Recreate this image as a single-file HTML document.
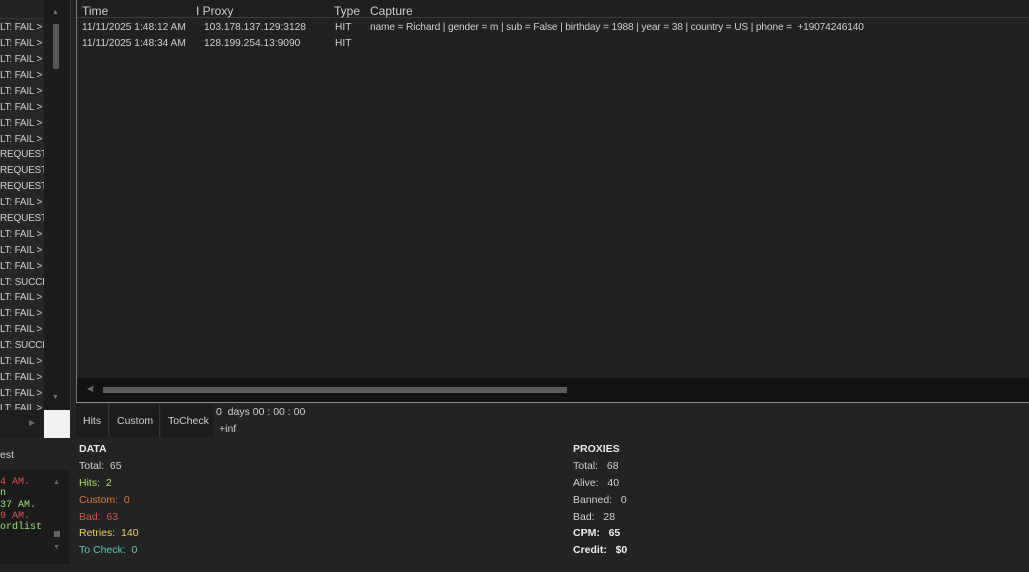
<!DOCTYPE html>
<html><head><meta charset="utf-8"><style>
*{margin:0;padding:0;box-sizing:border-box}
body{width:1029px;height:572px;background:#232323;position:relative;overflow:hidden;font-family:"Liberation Sans",sans-serif;font-size:10.5px;color:#d0d0d0}
.a{position:absolute;white-space:nowrap}
.log div{position:absolute;left:0;font-size:10px;color:#cfcfcf;letter-spacing:-0.2px}
.mono{font-family:"Liberation Mono",monospace;font-size:10px}
.b{font-weight:bold}
.g{font-size:10.2px}
</style></head><body>
<div class="a" style="left:0;top:0;width:44px;height:410px;background:#262626"></div>
<div class="a" style="left:0;top:0;width:44px;height:19px;background:#232323;border-bottom:1px solid #333"></div>
<div class="a" style="left:44px;top:0;width:26px;height:410px;background:#1b1b1b"></div>
<div class="a" style="left:53px;top:24px;width:6px;height:45px;background:#555"></div>
<div class="a" style="left:52px;top:9px;color:#777;font-size:7px">▲</div>
<div class="a" style="left:52px;top:394px;color:#777;font-size:7px">▼</div>
<div class="a" style="left:0;top:410px;width:44px;height:28px;background:#1e1e1e"></div>
<div class="a" style="left:29px;top:418px;color:#666;font-size:8px">▶</div>
<div class="a" style="left:44px;top:410px;width:26px;height:28px;background:#f2f2f2"></div>
<div class="log a" style="left:0;top:1px;width:44px;height:409px;overflow:hidden">
<div style="top:21px">LT: FAIL &gt;</div><div style="top:37px">LT: FAIL &gt;</div><div style="top:53px">LT: FAIL &gt;</div><div style="top:69px">LT: FAIL &gt;</div><div style="top:85px">LT: FAIL &gt;</div><div style="top:101px">LT: FAIL &gt;</div><div style="top:117px">LT: FAIL &gt;</div><div style="top:133px">LT: FAIL &gt;</div>
<div style="top:148px">REQUEST</div><div style="top:164px">REQUEST</div><div style="top:180px">REQUEST</div><div style="top:196px">LT: FAIL &gt;</div><div style="top:212px">REQUEST</div><div style="top:228px">LT: FAIL &gt;</div><div style="top:244px">LT: FAIL &gt;</div><div style="top:260px">LT: FAIL &gt;</div><div style="top:276px">LT: SUCCE</div><div style="top:291px">LT: FAIL &gt;</div><div style="top:307px">LT: FAIL &gt;</div><div style="top:323px">LT: FAIL &gt;</div><div style="top:339px">LT: SUCCE</div><div style="top:355px">LT: FAIL &gt;</div><div style="top:371px">LT: FAIL &gt;</div><div style="top:387px">LT: FAIL &gt;</div><div style="top:402px">LT: FAIL &gt;</div>
</div>
<div class="a" style="left:70px;top:0;width:6px;height:410px;background:#232323;border-left:1px solid #333"></div>
<div class="a" style="left:76px;top:0;width:953px;height:403px;background:#212121;border-left:1px solid #777;border-bottom:1px solid #888"></div>
<div class="a" style="left:77px;top:0;width:952px;height:18px;background:#1f1f1f;border-bottom:1px solid #3a3a3a"></div>
<div class="a" style="left:82px;top:4px;font-size:12px;color:#ccc">Time</div>
<div class="a" style="left:196px;top:4px;font-size:12px;color:#ccc">I Proxy</div>
<div class="a" style="left:334px;top:4px;font-size:12px;color:#ccc">Type</div>
<div class="a" style="left:370px;top:4px;font-size:12px;color:#ccc">Capture</div>
<div class="a g" style="left:82px;top:22px">11/11/2025 1:48:12 AM</div>
<div class="a g" style="left:204px;top:22px">103.178.137.129:3128</div>
<div class="a g" style="left:335px;top:22px">HIT</div>
<div class="a g" style="left:370px;top:22px;letter-spacing:-0.15px">name = Richard | gender = m | sub = False | birthday = 1988 | year = 38 | country = US | phone = &nbsp;+19074246140</div>
<div class="a g" style="left:82px;top:38px">11/11/2025 1:48:34 AM</div>
<div class="a g" style="left:204px;top:38px">128.199.254.13:9090</div>
<div class="a g" style="left:335px;top:38px">HIT</div>
<div class="a" style="left:77px;top:378px;width:952px;height:24px;background:#131313"></div>
<div class="a" style="left:87px;top:384px;color:#666;font-size:8px">◀</div>
<div class="a" style="left:103px;top:387px;width:464px;height:6px;background:#5c5c5c"></div>
<div class="a" style="left:76px;top:404px;width:33px;height:33px;background:#1c1c1c;border-right:1px solid #333"></div>
<div class="a" style="left:83px;top:415px">Hits</div>
<div class="a" style="left:110px;top:404px;width:50px;height:33px;background:#1c1c1c;border-right:1px solid #333"></div>
<div class="a" style="left:117px;top:415px">Custom</div>
<div class="a" style="left:161px;top:404px;width:52px;height:33px;background:#1c1c1c"></div>
<div class="a" style="left:168px;top:415px">ToCheck</div>
<div class="a" style="left:216px;top:406px">0 &nbsp;days 00 : 00 : 00</div>
<div class="a" style="left:219px;top:423px">+inf</div>
<div class="a" style="left:0;top:449px">est</div>
<div class="a" style="left:0;top:470px;width:70px;height:94px;background:#1b1b1b"></div>
<div class="a mono" style="left:0;top:477px;color:#e05050">4 AM.</div>
<div class="a mono" style="left:0;top:488px;color:#9be07a">n</div>
<div class="a mono" style="left:0;top:500px;color:#9be07a">37 AM.</div>
<div class="a mono" style="left:0;top:511px;color:#e05050">9 AM.</div>
<div class="a mono" style="left:0;top:522px;color:#9be07a">ordlist</div>
<div class="a" style="left:53px;top:479px;color:#666;font-size:7px">▲</div>
<div class="a" style="left:54px;top:531px;width:6px;height:6px;background:#666"></div>
<div class="a" style="left:53px;top:544px;color:#666;font-size:7px">▼</div>
<div class="a b" style="left:79px;top:443px;color:#e8e8e8">DATA</div>
<div class="a" style="left:79px;top:460px">Total: &nbsp;65</div>
<div class="a" style="left:79px;top:477px;color:#a8e060">Hits: &nbsp;2</div>
<div class="a" style="left:79px;top:494px;color:#d07a3a">Custom: &nbsp;0</div>
<div class="a" style="left:79px;top:511px;color:#d05050">Bad: &nbsp;63</div>
<div class="a" style="left:79px;top:527px;color:#e8d060">Retries: &nbsp;140</div>
<div class="a" style="left:79px;top:544px;color:#5fc8b0">To Check: &nbsp;0</div>
<div class="a b" style="left:573px;top:443px;color:#e8e8e8">PROXIES</div>
<div class="a" style="left:573px;top:460px">Total: &nbsp;&nbsp;68</div>
<div class="a" style="left:573px;top:477px">Alive: &nbsp;&nbsp;40</div>
<div class="a" style="left:573px;top:494px">Banned: &nbsp;&nbsp;0</div>
<div class="a" style="left:573px;top:511px">Bad: &nbsp;&nbsp;28</div>
<div class="a b" style="left:573px;top:527px;color:#eee">CPM: &nbsp;&nbsp;65</div>
<div class="a b" style="left:573px;top:544px;color:#eee">Credit: &nbsp;&nbsp;$0</div>
</body></html>
